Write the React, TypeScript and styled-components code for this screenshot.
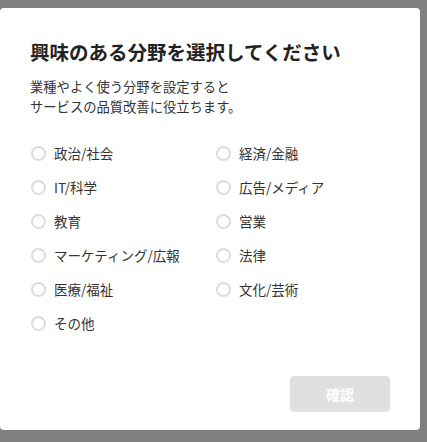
import React from "react";
import styled, { createGlobalStyle } from "styled-components";

const Global = createGlobalStyle`
  html, body { margin: 0; padding: 0; }
  body {
    background: #7f7f7f;
    font-family: "Noto Sans CJK JP", "Noto Sans", sans-serif;
    width: 427px;
    height: 442px;
    overflow: hidden;
  }
`;

const Card = styled.div`
  box-sizing: border-box;
  margin-top: 8px;
  width: 420px;
  height: 422px;
  background: #fff;
  border-radius: 4px;
  padding: 30px 30px 18px 30px;
  display: flex;
  flex-direction: column;
`;

const Title = styled.h2`
  margin: 0;
  font-size: 19.5px;
  line-height: 28px;
  font-weight: 700;
  color: #222;
`;

const Lead = styled.p`
  margin: 11px 0 0 0;
  font-size: 13.3px;
  line-height: 19.5px;
  color: #333;
`;

const Options = styled.div`
  margin-top: 20px;
  display: grid;
  grid-template-columns: 185px 1fr;
  grid-auto-rows: 34px;
`;

const Option = styled.label`
  display: flex;
  align-items: center;
  gap: 8px;
  font-size: 13.5px;
  color: #333;
  cursor: pointer;
`;

const Radio = styled.span`
  box-sizing: border-box;
  width: 15px;
  height: 15px;
  margin-left: 1px;
  border-radius: 50%;
  border: 2px solid #dcdcdc;
  flex: none;
`;

const Footer = styled.div`
  margin-top: auto;
  display: flex;
  justify-content: flex-end;
`;

const Confirm = styled.button`
  width: 100px;
  height: 36px;
  border: none;
  border-radius: 4px;
  background: #e0e0e0;
  color: #fff;
  font-family: inherit;
  font-size: 14px;
  font-weight: 700;
`;

const items = [
  "政治/社会",
  "経済/金融",
  "IT/科学",
  "広告/メディア",
  "教育",
  "営業",
  "マーケティング/広報",
  "法律",
  "医療/福祉",
  "文化/芸術",
  "その他",
];

export default function App() {
  return (
    <>
      <Global />
      <Card>
        <Title>興味のある分野を選択してください</Title>
        <Lead>
          業種やよく使う分野を設定すると
          <br />
          サービスの品質改善に役立ちます。
        </Lead>
        <Options>
          {items.map((t) => (
            <Option key={t}>
              <Radio />
              {t}
            </Option>
          ))}
        </Options>
        <Footer>
          <Confirm disabled>確認</Confirm>
        </Footer>
      </Card>
    </>
  );
}
